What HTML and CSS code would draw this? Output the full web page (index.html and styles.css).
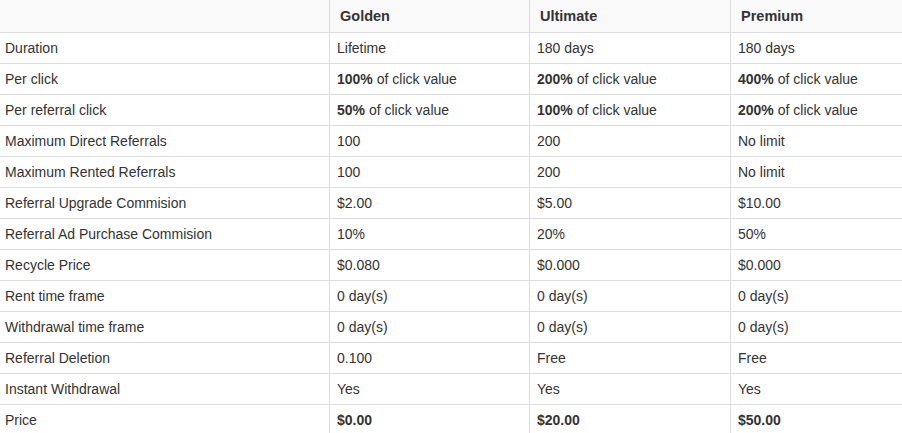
FILE: index.html
```html
<!DOCTYPE html>
<html>
<head>
<meta charset="utf-8">
<link rel="stylesheet" href="styles.css">
</head>
<body>
<table class="plans">
  <thead>
    <tr>
      <th class="label"></th>
      <th class="c2">Golden</th>
      <th class="c3">Ultimate</th>
      <th class="c4">Premium</th>
    </tr>
  </thead>
  <tbody>
    <tr><td class="label">Duration</td><td>Lifetime</td><td>180 days</td><td>180 days</td></tr>
    <tr><td class="label">Per click</td><td><b>100%</b> of click value</td><td><b>200%</b> of click value</td><td><b>400%</b> of click value</td></tr>
    <tr><td class="label">Per referral click</td><td><b>50%</b> of click value</td><td><b>100%</b> of click value</td><td><b>200%</b> of click value</td></tr>
    <tr><td class="label">Maximum Direct Referrals</td><td>100</td><td>200</td><td>No limit</td></tr>
    <tr><td class="label">Maximum Rented Referrals</td><td>100</td><td>200</td><td>No limit</td></tr>
    <tr><td class="label">Referral Upgrade Commision</td><td>$2.00</td><td>$5.00</td><td>$10.00</td></tr>
    <tr><td class="label">Referral Ad Purchase Commision</td><td>10%</td><td>20%</td><td>50%</td></tr>
    <tr><td class="label">Recycle Price</td><td>$0.080</td><td>$0.000</td><td>$0.000</td></tr>
    <tr><td class="label">Rent time frame</td><td>0 day(s)</td><td>0 day(s)</td><td>0 day(s)</td></tr>
    <tr><td class="label">Withdrawal time frame</td><td>0 day(s)</td><td>0 day(s)</td><td>0 day(s)</td></tr>
    <tr><td class="label">Referral Deletion</td><td>0.100</td><td>Free</td><td>Free</td></tr>
    <tr><td class="label">Instant Withdrawal</td><td>Yes</td><td>Yes</td><td>Yes</td></tr>
    <tr><td class="label">Price</td><td><b>$0.00</b></td><td><b>$20.00</b></td><td><b>$50.00</b></td></tr>
  </tbody>
</table>
</body>
</html>
```
FILE: styles.css
```css
html, body {
  margin: 0;
  padding: 0;
  background: #fff;
}
body {
  font-family: "Liberation Sans", Arial, sans-serif;
  font-size: 14px;
  color: #333;
  overflow: hidden;
}
.plans {
  border-collapse: separate;
  border-spacing: 0;
  width: 902px;
  table-layout: fixed;
}
.plans th {
  background: #f9f9f9;
  height: 32px;
  padding: 0 0 0 10px;
  text-align: left;
  font-weight: bold;
  font-size: 14.5px;
  vertical-align: middle;
  border-left: 1px solid #ddd;
  box-sizing: border-box;
}
.plans td {
  border-top: 1px solid #ddd;
  border-left: 1px solid #ddd;
  height: 31px;
  padding: 0 0 0 7px;
  vertical-align: middle;
  white-space: nowrap;
  box-sizing: border-box;
}
.plans th.label,
.plans td.label {
  border-left: none;
  padding-left: 5px;
  width: 329px;
}
.plans th.c2 { width: 200px; }
.plans th.c3 { width: 201px; }
.plans th.c4 { width: 172px; }
.plans b {
  font-weight: bold;
}
```
